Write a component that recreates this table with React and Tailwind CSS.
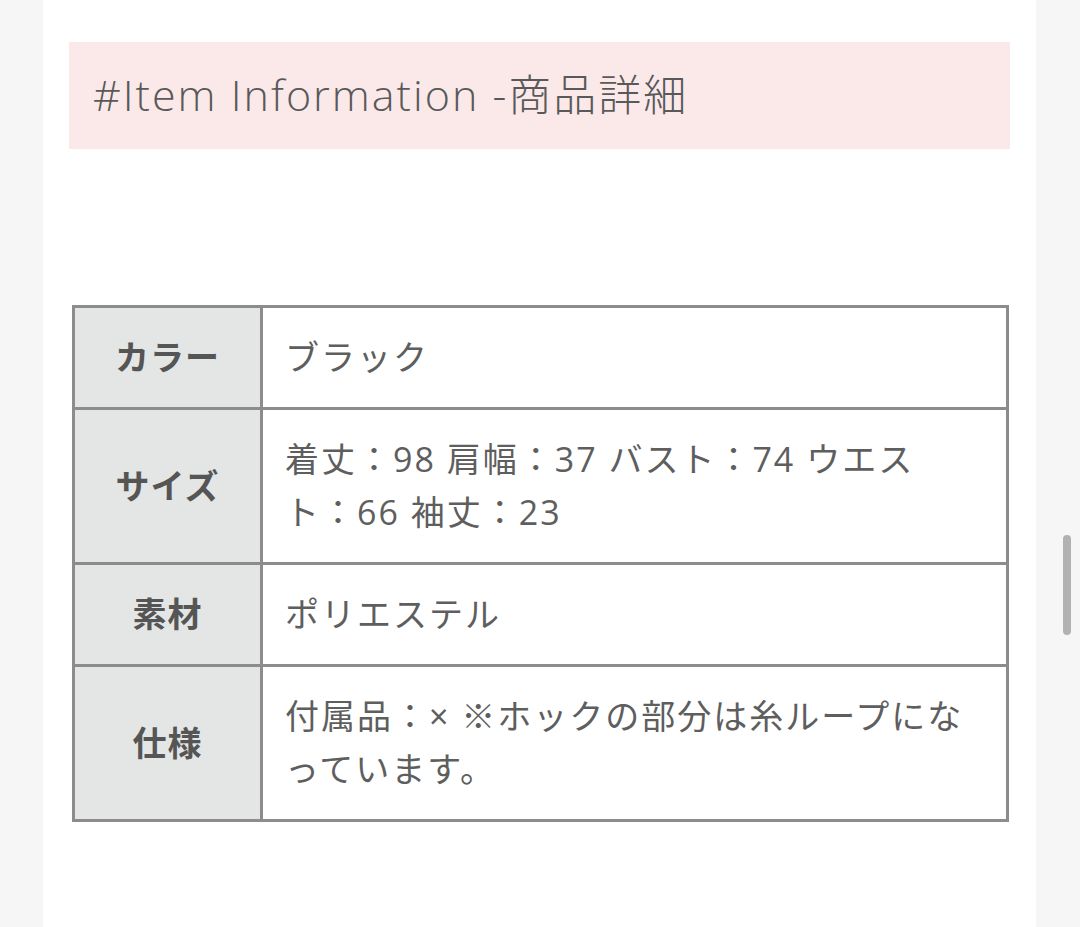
const rows = [
  { label: 'カラー', value: 'ブラック' },
  { label: 'サイズ', value: '着丈：98 肩幅：37 バスト：74 ウエスト：66 袖丈：23' },
  { label: '素材', value: 'ポリエステル' },
  { label: '仕様', value: '付属品：× ※ホックの部分は糸ループになっています。' },
];

export default function App() {
  return (
    <div className="relative min-h-screen h-[927px] overflow-hidden bg-[#f6f6f6] flex" style={{ fontFamily: '"Open Sans", "Noto Sans CJK JP", sans-serif' }}>
      <div className="ml-[43px] w-[993px] bg-white pt-[42px]">
        <div className="mx-[26px] h-[107px] bg-[#fbe9ea] flex items-center pl-[24px]">
          <h2 className="text-[43px] font-light tracking-[2px] text-[#595959]">#Item Information -商品詳細</h2>
        </div>

        <table className="ml-[29px] mt-[156px] w-[937px] border-collapse border-[3px] border-[#8c8c8c] text-[34px] leading-[53px] tracking-[2px] text-[#5e5e5e]">
          <tbody>
            {rows.map(r => (
              <tr key={r.label}>
                <th className="w-[188px] border-[3px] border-[#8c8c8c] bg-[#e3e6e5] font-bold tracking-[1px] text-center align-middle py-[23px] text-[#555]">
                  {r.label}
                </th>
                <td className="border-[3px] border-[#8c8c8c] pl-[22px] pr-[30px] py-[23px] text-left align-middle font-normal">
                  {r.value}
                </td>
              </tr>
            ))}
          </tbody>
        </table>
      </div>

      <div className="absolute left-[1063px] top-[535px] w-[8px] h-[100px] rounded-full bg-[#b2b2b2]" />
    </div>
  );
}
